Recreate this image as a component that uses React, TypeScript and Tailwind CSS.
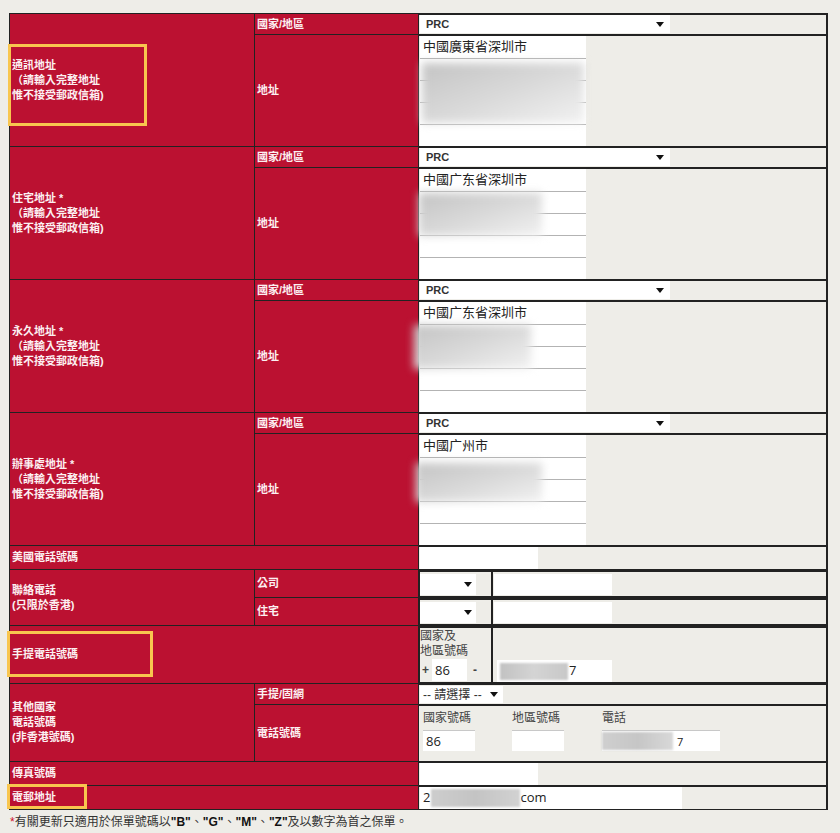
import clsx from "clsx";
import type { ReactNode } from "react";

// red label cell + beige input cell styles
const RED =
  "bg-[#bb1131] text-[#fcf0f2] font-bold text-[11px] leading-[15px] flex items-center pl-[2px]";
const CELL = "bg-[#eeede8] border-t border-r border-[#222]";

function Arrow({ className }: { className?: string }) {
  return (
    <span
      className={clsx(
        "h-0 w-0 border-x-[4px] border-t-[5px] border-x-transparent border-t-[#111]",
        className
      )}
    />
  );
}

function Field({
  className,
  children,
}: {
  className: string;
  children?: ReactNode;
}) {
  return (
    <div
      className={clsx(
        "relative flex items-center bg-white px-[3px] text-[13px] text-[#222] font-['Open_Sans','Noto_Sans_CJK_TC',sans-serif]",
        className
      )}
    >
      {children}
    </div>
  );
}

function Blur({ className }: { className: string }) {
  return (
    <div
      className={clsx(
        "absolute bg-linear-to-br from-[#c4c4c4] via-[#d9d9d9] to-[#f2f2f2] blur-[4px]",
        className
      )}
    />
  );
}

function PhoneRow() {
  return (
    <div className="flex border-t border-[#222] bg-[#eeede8]">
      <div className="flex flex-1 border border-[#222]">
        <div className="flex w-[73px] items-center border-r-2 border-[#222]">
          <div className="flex h-[21px] w-[56px] items-center bg-white pr-[4px]">
            <Arrow className="ml-auto" />
          </div>
        </div>
        <div className="flex flex-1 items-center pl-px">
          <Field className="h-[21px] w-[118px]" />
        </div>
      </div>
    </div>
  );
}

const addresses = [
  {
    title: "通訊地址",
    first: "中國廣東省深圳市",
    blur: "left-[3px] top-[27px] w-[162px] h-[60px]",
  },
  {
    title: "住宅地址 *",
    first: "中國广东省深圳市",
    blur: "left-0 top-[24px] w-[123px] h-[43px]",
  },
  {
    title: "永久地址 *",
    first: "中國广东省深圳市",
    blur: "-left-[5px] top-[23px] w-[117px] h-[44px]",
  },
  {
    title: "辦事處地址 *",
    first: "中國广州市",
    blur: "-left-[3px] top-[28px] w-[126px] h-[39px]",
  },
];

export default function App() {
  return (
    <div className="min-h-[833px] bg-[#eeede8] pt-[13px] font-['Liberation_Sans','Noto_Sans_CJK_TC',sans-serif]">
      <div className="ml-[9px] grid w-[819px] grid-cols-[244px_163px_408px] grid-rows-[20px_111px_20px_111px_20px_111px_20px_111px_23px_27px_27px_57px_20px_56px_23px_23px] gap-px bg-[#222] p-px">
        {/* Address blocks */}
        {addresses.map((a, idx) => (
          <div key={a.title} className="contents">
            <div className={clsx(RED, "relative row-span-2")}>
              <div>
                <div>{a.title}</div>
                <div>（請輸入完整地址</div>
                <div>惟不接受郵政信箱)</div>
              </div>
              {idx === 0 && (
                <div className="absolute -left-[2px] top-[30px] h-[82px] w-[139px] border-[3px] border-[#f8c64f]" />
              )}
            </div>
            <div className={RED}>國家/地區</div>
            <div className={clsx(CELL, "pl-px")}>
              <div className="flex h-[18px] w-[250px] items-center bg-white pl-[6px] pr-[6px] text-[11px] font-bold text-[#333]">
                PRC
                <Arrow className="ml-auto" />
              </div>
            </div>
            <div className={RED}>地址</div>
            <div className={clsx(CELL, "relative pl-px")}>
              {[a.first, "", "", "", ""].map((v, i) => (
                <Field
                  key={i}
                  className={clsx(
                    "h-[22px] w-[166px]",
                    i > 0 && "border-t border-[#b3b3b3]"
                  )}
                >
                  {v}
                </Field>
              ))}
              <Blur className={a.blur} />
            </div>
          </div>
        ))}

        {/* US phone */}
        <div className={clsx(RED, "col-span-2")}>美國電話號碼</div>
        <div className={clsx(CELL, "pl-px")}>
          <Field className="h-[22px] w-[118px]" />
        </div>

        {/* Contact phone (HK) */}
        <div className={clsx(RED, "row-span-2")}>
          <div>
            <div>聯絡電話</div>
            <div>(只限於香港)</div>
          </div>
        </div>
        <div className={RED}>公司</div>
        <PhoneRow />
        <div className={RED}>住宅</div>
        <PhoneRow />

        {/* Mobile */}
        <div className={clsx(RED, "relative col-span-2")}>
          手提電話號碼
          <div className="absolute -left-[3px] top-[5px] h-[46px] w-[146px] border-[3px] border-[#f8c64f]" />
        </div>
        <div className="flex border-t border-[#222] bg-[#eeede8]">
          <div className="flex flex-1 border border-[#222]">
            <div className="w-[73px] border-r-2 border-[#222] pt-[1px] text-[12px] leading-[15px] text-[#444]">
              <div>國家及</div>
              <div>地區號碼</div>
              <div className="flex h-[22px] items-center">
                <span className="w-[12px] pl-[2px] font-bold">+</span>
                <Field className="h-[22px] w-[35px]">86</Field>
                <span className="ml-[6px] font-bold">-</span>
              </div>
            </div>
            <div className="flex flex-1 items-end pl-[4px]">
              <Field className="h-[22px] w-[115px]">
                <div className="h-[17px] w-[68px] bg-linear-to-r from-[#c2c2c2] via-[#d4d4d4] to-[#c8c8c8] blur-[1px]" />
                <span className="ml-[1px]">7</span>
              </Field>
            </div>
          </div>
        </div>

        {/* Other countries */}
        <div className={clsx(RED, "row-span-2")}>
          <div>
            <div>其他國家</div>
            <div>電話號碼</div>
            <div>(非香港號碼)</div>
          </div>
        </div>
        <div className={RED}>手提/固網</div>
        <div className={clsx(CELL, "pl-px pt-px")}>
          <div className="flex h-[17px] w-[83px] items-center bg-white pl-[3px] pr-[5px] text-[12px] text-[#333]">
            -- 請選擇 --
            <Arrow className="ml-auto" />
          </div>
        </div>
        <div className={RED}>電話號碼</div>
        <div className={clsx(CELL, "flex pl-[4px] pt-[5px] text-[12px] leading-[15px] text-[#444]")}>
          <div className="w-[89px]">
            <div>國家號碼</div>
            <Field className="mt-[4px] h-[21px] w-[52px] border-t border-[#c8c8c8]">86</Field>
          </div>
          <div className="w-[90px]">
            <div>地區號碼</div>
            <Field className="mt-[4px] h-[21px] w-[52px] border-t border-[#c8c8c8]" />
          </div>
          <div>
            <div>電話</div>
            <Field className="mt-[4px] h-[21px] w-[118px] border-t border-[#c8c8c8]">
              <div className="-ml-[3px] h-[18px] w-[71px] bg-linear-to-r from-[#cfcfcf] via-[#c6c6c6] to-[#d8d8d8] blur-[1px]" />
              <span className="ml-[4px] text-[11px]">7</span>
            </Field>
          </div>
        </div>

        {/* Fax */}
        <div className={clsx(RED, "col-span-2")}>傳真號碼</div>
        <div className={clsx(CELL, "pl-px")}>
          <Field className="h-[22px] w-[118px]" />
        </div>

        {/* Email */}
        <div className={clsx(RED, "relative col-span-2")}>
          電郵地址
          <div className="absolute -left-[3px] -top-[2px] h-[25px] w-[80px] border-[3px] border-[#f8c64f]" />
        </div>
        <div className={clsx(CELL, "pl-px")}>
          <Field className="h-[22px] w-[262px]">
            2
            <div className="ml-[1px] h-[18px] w-[89px] bg-linear-to-r from-[#cdcdcd] via-[#c4c4c4] to-[#d2d2d2] blur-[1px]" />
            <span>com</span>
          </Field>
        </div>
      </div>

      {/* Footnote */}
      <p className="ml-[10px] pt-[3px] text-[12px] leading-[18px] text-[#333]">
        <span className="text-[#d0102a]">*</span>
        {"有關更新只適用於保單號碼以"}
        <b className="text-[#111]">"B"</b>
        {"、"}
        <b className="text-[#111]">"G"</b>
        {"、"}
        <b className="text-[#111]">"M"</b>
        {"、"}
        <b className="text-[#111]">"Z"</b>
        {"及以數字為首之保單。"}
      </p>
    </div>
  );
}
